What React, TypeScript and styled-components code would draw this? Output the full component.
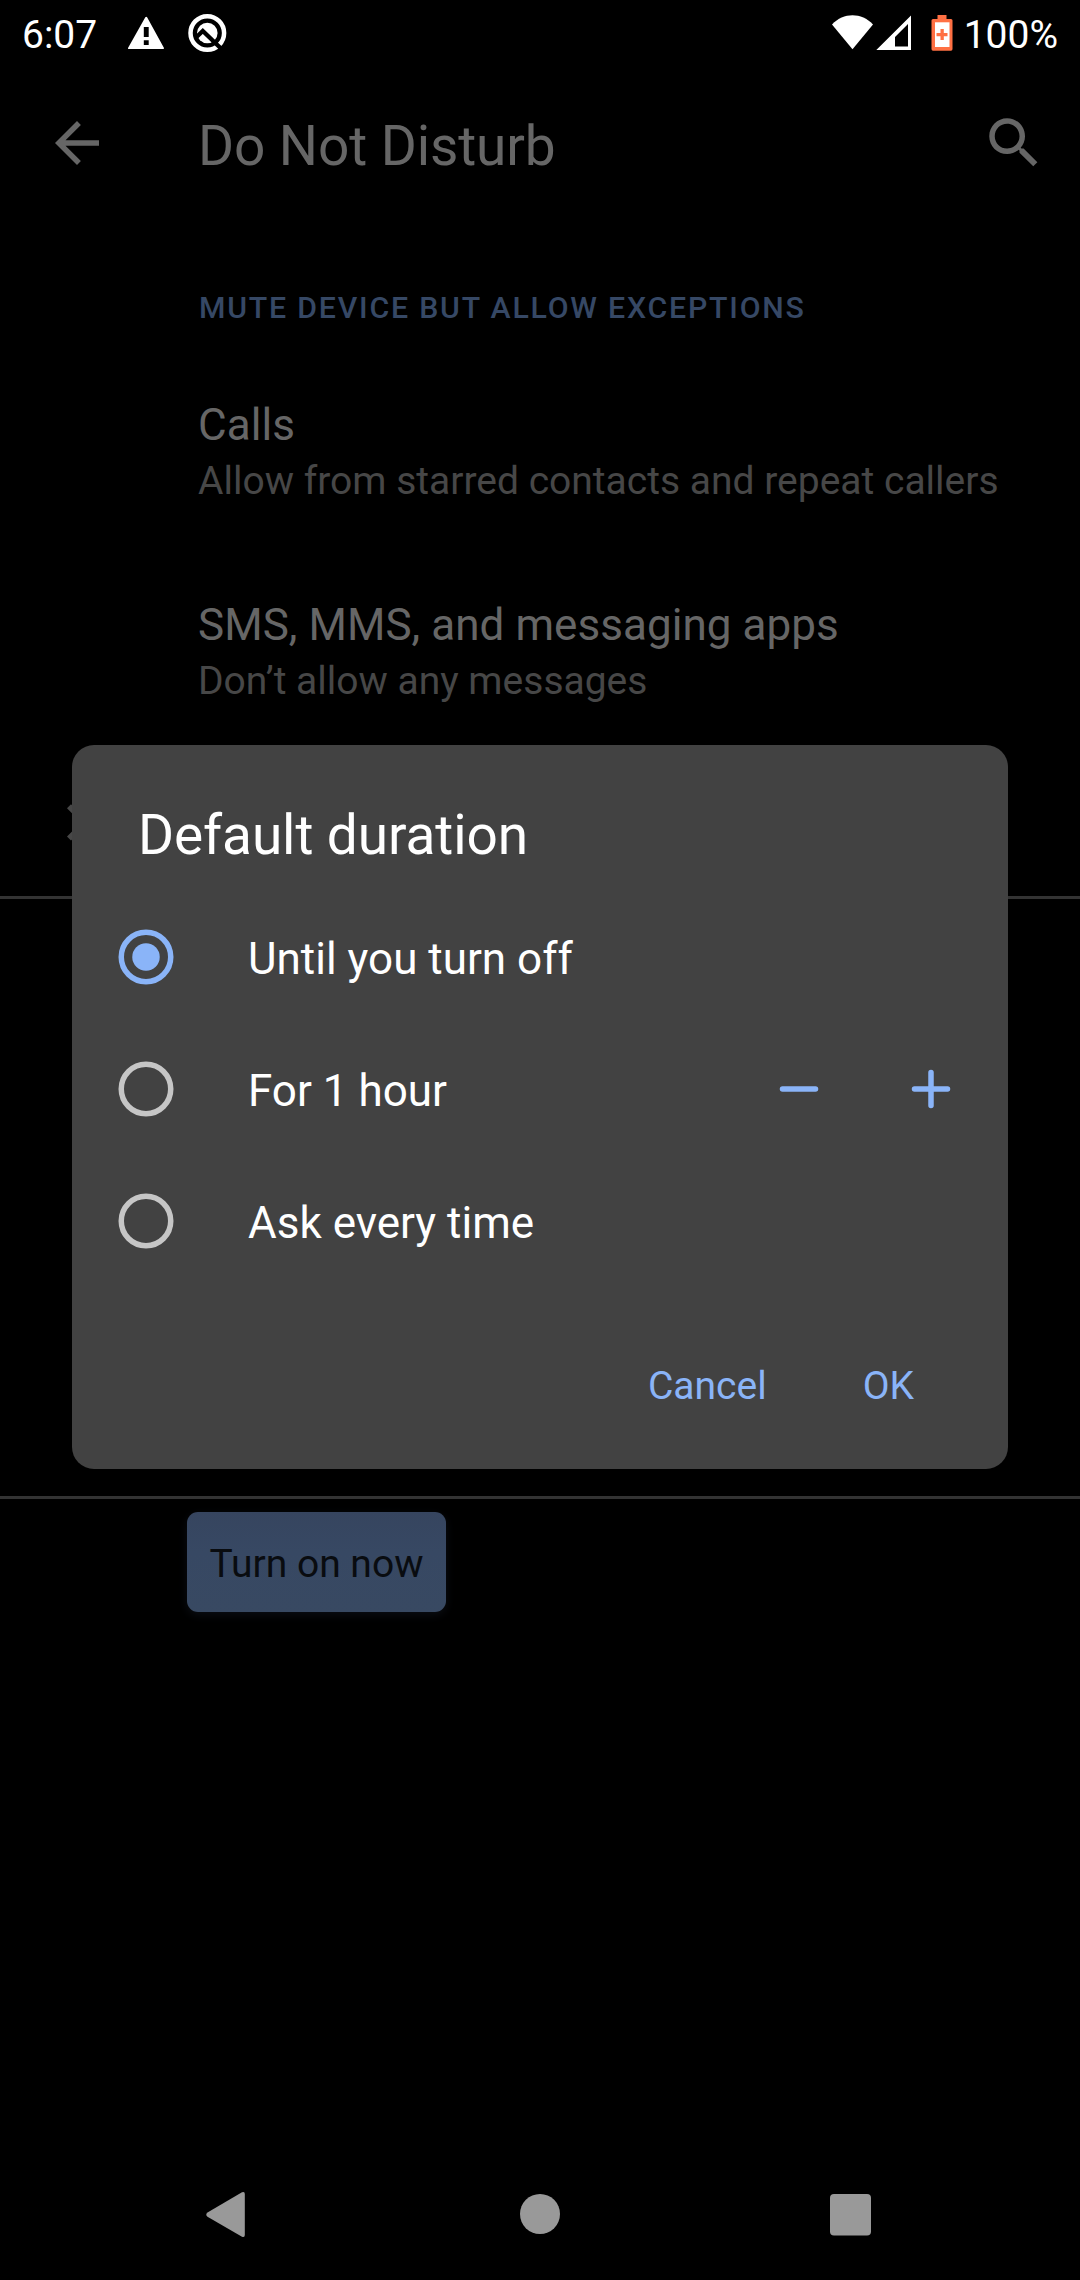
import React, { useState } from "react";
import styled, { createGlobalStyle } from "styled-components";

const ACCENT = "#8ab4f8";

const GlobalStyle = createGlobalStyle`
  * { box-sizing: border-box; }
  body {
    margin: 0;
    background: #000;
    font-family: Roboto, "Noto Sans", sans-serif;
  }
  button {
    margin: 0;
    padding: 0;
    border: 0;
    background: none;
    font: inherit;
    color: inherit;
  }
`;

const Screen = styled.div`
  position: relative;
  display: flex;
  flex-direction: column;
  width: 1080px;
  height: 2280px;
  overflow: hidden;
  background: #000;
`;

const StatusBar = styled.header`
  display: flex;
  align-items: center;
  justify-content: space-between;
  height: 66px;
  padding: 4px 22px 0;
  color: #fff;
  font-size: 39px;
  line-height: 46px;
`;

const StatusGroup = styled.div`
  display: flex;
  align-items: center;
`;

const BatteryLevel = styled.span`
  margin-left: 11px;
`;

const StatusIcon = styled.svg<{ $ml: number }>`
  display: block;
  margin-top: -4px;
  margin-left: ${(p) => p.$ml}px;
`;

const AppBar = styled.div`
  display: flex;
  align-items: center;
  height: 154px;
  padding: 0 33px 0 44px;
  color: #666;
`;

const IconButton = styled.button`
  display: flex;
  width: 66px;
  height: 66px;
  svg { display: block; }
`;

const PageTitle = styled.h1`
  flex: 1;
  margin: 5px 0 0 88px;
  font-size: 55px;
  font-weight: 400;
  line-height: 64px;
  letter-spacing: -0.1px;
`;

const Category = styled.h2`
  margin: 0;
  padding: 70px 0 0 199px;
  height: 141px;
  color: #364865;
  font-size: 30.25px;
  font-weight: 500;
  line-height: 36px;
  letter-spacing: 1.8px;
  white-space: nowrap;
`;

const Preference = styled.div`
  height: 200px;
  padding: 38px 44px 0 198px;
  white-space: nowrap;
`;

const PrefTitle = styled.div`
  color: #666;
  font-size: 44px;
  line-height: 52px;
  letter-spacing: 0.05px;
`;

const PrefSummary = styled.div`
  margin-top: 7px;
  color: #474747;
  font-size: 39px;
  line-height: 46px;
`;

const CollapsedRow = styled.div`
  display: flex;
  align-items: center;
  height: 135px;
  padding-left: 44px;
`;

const Divider = styled.hr`
  width: 100%;
  height: 3px;
  margin: 0;
  border: 0;
  background: #333;
`;

const HiddenSection = styled.div`
  height: 597px;
`;

const TurnOn = styled.button`
  width: 259px;
  height: 100px;
  margin: 13px 0 0 187px;
  border-radius: 11px;
  background: linear-gradient(#36455f, #374863 40%, #384962);
  box-shadow: 0 3px 10px rgba(55, 72, 99, 0.2);
  color: #090c10;
  font-size: 39px;
  line-height: 46px;
  padding-top: 4px;
`;

const Dialog = styled.section`
  position: absolute;
  left: 72px;
  top: 745px;
  display: flex;
  flex-direction: column;
  width: 936px;
  height: 724px;
  border-radius: 22px;
  background: #424242;
  color: #fff;
`;

const DialogTitle = styled.h2`
  height: 146px;
  margin: 0;
  padding: 58px 66px 0;
  font-size: 55px;
  font-weight: 400;
  line-height: 64px;
  letter-spacing: -0.1px;
`;

const Option = styled.div`
  display: flex;
  align-items: center;
  height: 132px;
  padding: 0 11px 0 46px;
`;

const RadioButton = styled.button<{ $on: boolean }>`
  display: flex;
  width: 56px;
  height: 56px;
  color: ${(p) => (p.$on ? ACCENT : "#c6c6c6")};
`;

const OptionLabel = styled.span`
  flex: 1;
  margin: 4px 0 0 74px;
  font-size: 44px;
  line-height: 52px;
`;

const StepButton = styled.button`
  display: flex;
  align-items: center;
  justify-content: center;
  width: 132px;
  height: 132px;
`;

const Actions = styled.footer`
  display: flex;
  justify-content: flex-end;
  gap: 96px;
  padding: 76px 94px 0;
  color: ${ACCENT};
  font-size: 39px;
  line-height: 46px;
`;

const NavBar = styled.nav`
  display: flex;
  align-items: center;
  justify-content: space-between;
  height: 132px;
  margin-top: auto;
  padding: 0 192px;
`;

const WarningIcon = () => (
  <StatusIcon $ml={30} width="38" height="40" viewBox="127 13 38 40">
    <path
      fill="#fff"
      fillRule="evenodd"
      d="M145.300 17.200q.9-1 1.800 0L164 48q0 .9-.7.9H128.600q-.9 0-.6-.9zM143.800 27v10h4.900V27zM143.800 40.200v4.700h4.900v-4.700z"
    />
  </StatusIcon>
);

const QIcon = () => (
  <StatusIcon $ml={22} width="42" height="42" viewBox="187 12 42 42">
    <circle cx="207.3" cy="33" r="16.8" fill="none" stroke="#fff" strokeWidth="4.5" />
    <circle cx="207.3" cy="33" r="10.3" fill="#fff" />
    <path d="M196 37.500 202.800 31 221 48.500" fill="none" stroke="#000" strokeWidth="4.300" />
  </StatusIcon>
);

const WifiIcon = () => (
  <StatusIcon $ml={0} width="42" height="40" viewBox="831 13 42 40">
    <path fill="#fff" d="M832 24.500C843.500 12.300 861.500 12.300 873 24.500L852.500 49.300z" />
  </StatusIcon>
);

const SignalIcon = () => (
  <StatusIcon $ml={3} width="36" height="40" viewBox="876 13 36 40">
    <path fill="#fff" fillRule="evenodd" d="M911 15.500V50H876.300zM908 24 895 37v9.500h13z" />
  </StatusIcon>
);

const BatteryIcon = () => (
  <StatusIcon $ml={19} width="22" height="40" viewBox="930.500 13 22 40">
    <path
      fill="#ff7043"
      d="M937 15h9v4h4.500q1.500 0 1.500 1.500V49q0 1.800-1.500 1.800h-18q-1.500 0-1.500-1.800V20.500Q931 19 932.500 19H937z"
    />
    <path fill="#fff" d="M934.500 22.300h14.500V47h-14.500z" />
    <path fill="#ff7043" d="M940 29h3.300v4H947v3.300h-3.700V40H940v-3.700h-4V33h4z" />
  </StatusIcon>
);

const RadioMark = ({ on }: { on: boolean }) => (
  <svg width="56" height="56" viewBox="-28 -28 56 56">
    <circle r="24.75" fill="none" stroke="currentColor" strokeWidth="5.5" />
    {on && <circle r="13.75" fill="currentColor" />}
  </svg>
);

const OPTIONS = ["Until you turn off", "For 1 hour", "Ask every time"];

export default function App() {
  const [selected, setSelected] = useState(0);

  return (
    <>
      <GlobalStyle />
      <Screen>
        <StatusBar>
          <StatusGroup>
            <span>6:07</span>
            <WarningIcon />
            <QIcon />
          </StatusGroup>
          <StatusGroup>
            <WifiIcon />
            <SignalIcon />
            <BatteryIcon />
            <BatteryLevel>100%</BatteryLevel>
          </StatusGroup>
        </StatusBar>

        <AppBar>
          <IconButton aria-label="Back">
            <svg width="66" height="66" viewBox="0 0 24 24" fill="currentColor">
              <path d="M20 11H7.830l5.590-5.590L12 4l-8 8 8 8 1.410-1.410L7.830 13H20v-2z" />
            </svg>
          </IconButton>
          <PageTitle>Do Not Disturb</PageTitle>
          <IconButton aria-label="Search">
            <svg width="66" height="66" viewBox="0 0 24 24" fill="currentColor">
              <path d="M15.500 14h-.79l-.28-.27C15.410 12.590 16 11.110 16 9.500 16 5.910 13.090 3 9.500 3S3 5.910 3 9.500 5.910 16 9.500 16c1.610 0 3.090-.59 4.230-1.570l.27.28v.79l5 4.990L20.490 19l-4.990-5zm-6 0C7.010 14 5 11.990 5 9.500S7.010 5 9.500 5 14 7.010 14 9.500 11.990 14 9.500 14z" />
            </svg>
          </IconButton>
        </AppBar>

        <Category>MUTE DEVICE BUT ALLOW EXCEPTIONS</Category>
        <Preference>
          <PrefTitle>Calls</PrefTitle>
          <PrefSummary>Allow from starred contacts and repeat callers</PrefSummary>
        </Preference>
        <Preference>
          <PrefTitle>SMS, MMS, and messaging apps</PrefTitle>
          <PrefSummary>Don’t allow any messages</PrefSummary>
        </Preference>
        <CollapsedRow>
          <svg width="66" height="66" viewBox="44 795.500 66 66" fill="#474747">
            <path d="M67 807.700l4-4 12 12-4 4zM67 836l4 4 12-12-4-4z" />
          </svg>
        </CollapsedRow>
        <Divider />
        <HiddenSection />
        <Divider />
        <TurnOn>Turn on now</TurnOn>

        <NavBar>
          <svg width="66" height="66" viewBox="192 2181 66 66" fill="#999">
            <path d="M242 2192.300q2.800-1.300 2.800 1.700v41q0 3-2.800 1.700l-34.500-20q-2.500-2 0-4.200z" />
          </svg>
          <svg width="66" height="66" viewBox="507 2181 66 66" fill="#999">
            <circle cx="540" cy="2214" r="20" />
          </svg>
          <svg width="66" height="66" viewBox="822 2181 66 66" fill="#999">
            <rect x="830" y="2194" width="41" height="41.500" rx="4" />
          </svg>
        </NavBar>

        <Dialog role="dialog" aria-label="Default duration">
          <DialogTitle>Default duration</DialogTitle>
          {OPTIONS.map((label, i) => (
            <Option key={label}>
              <RadioButton $on={selected === i} aria-label={label} onClick={() => setSelected(i)}>
                <RadioMark on={selected === i} />
              </RadioButton>
              <OptionLabel>{label}</OptionLabel>
              {i === 1 && (
                <>
                  <StepButton aria-label="Less">
                    <svg width="40" height="40" viewBox="-20 -20 40 40" stroke={ACCENT} strokeWidth="5.500" strokeLinecap="round">
                      <path d="M-16.500 0h33" />
                    </svg>
                  </StepButton>
                  <StepButton aria-label="More">
                    <svg width="40" height="40" viewBox="-20 -20 40 40" stroke={ACCENT} strokeWidth="5.500" strokeLinecap="round">
                      <path d="M-16.500 0h33M0-16.500v33" />
                    </svg>
                  </StepButton>
                </>
              )}
            </Option>
          ))}
          <Actions>
            <button>Cancel</button>
            <button>OK</button>
          </Actions>
        </Dialog>
      </Screen>
    </>
  );
}
